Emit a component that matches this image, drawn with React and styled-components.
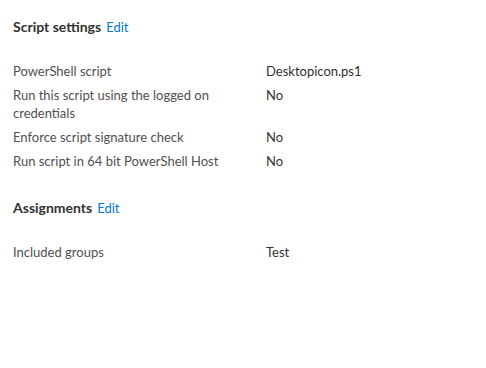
import React from 'react'
import styled, { createGlobalStyle } from 'styled-components'

const GlobalStyle = createGlobalStyle`
  body {
    margin: 0;
    background: #ffffff;
    font-family: "Lato", "Open Sans", sans-serif;
  }
`
const Page = styled.div`
  padding: 16px 13px 0 13px;
  width: 486px;
  box-sizing: border-box;
`
const Section = styled.section`
  margin-bottom: 27px;
`
const Heading = styled.div`
  display: flex;
  align-items: baseline;
  gap: 5px;
  height: 22px;
  line-height: 22px;
  margin-bottom: 24px;
`
const Title = styled.span`
  font-weight: bold;
  font-size: 14px;
  color: #323130;
`
const EditLink = styled.a`
  font-size: 13px;
  color: #0078d4;
  cursor: pointer;
`
const Row = styled.div`
  display: grid;
  grid-template-columns: 253px 1fr;
  margin-bottom: 6px;
  font-size: 13px;
  line-height: 18px;
`
const Label = styled.div`
  color: #505050;
  max-width: 215px;
`
const Value = styled.div`
  color: #323130;
`

const scriptSettings = [
  ['PowerShell script', 'Desktopicon.ps1'],
  ['Run this script using the logged on credentials', 'No'],
  ['Enforce script signature check', 'No'],
  ['Run script in 64 bit PowerShell Host', 'No'],
]

const assignments = [['Included groups', 'Test']]

const Block = ({ title, rows }) =>
  <Section>
    <Heading>
      <Title>{title}</Title>
      <EditLink>Edit</EditLink>
    </Heading>
    {rows.map(([label, value]) =>
      <Row key={label}>
        <Label>{label}</Label>
        <Value>{value}</Value>
      </Row>
    )}
  </Section>

const App = () =>
  <>
    <GlobalStyle />
    <Page>
      <Block title="Script settings" rows={scriptSettings} />
      <Block title="Assignments" rows={assignments} />
    </Page>
  </>

export default App
